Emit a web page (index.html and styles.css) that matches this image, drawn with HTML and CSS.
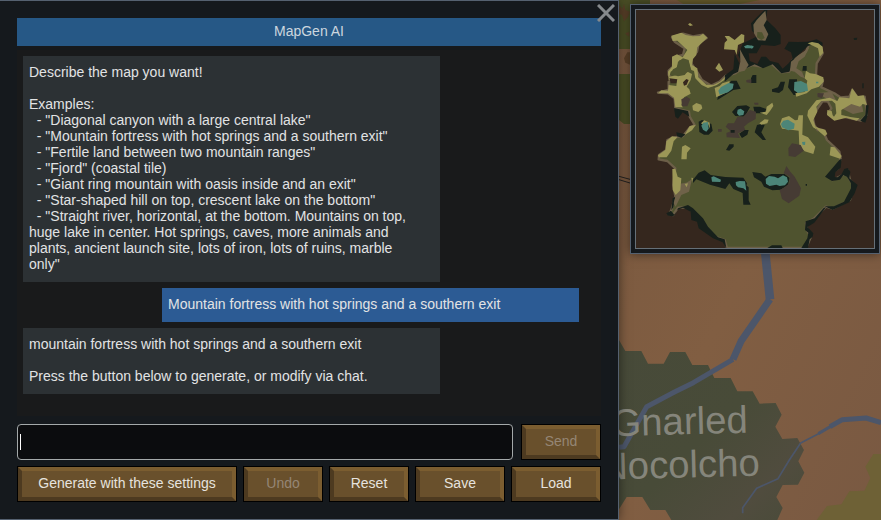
FILE: index.html
```html
<!DOCTYPE html>
<html lang="en">
<head>
  <meta charset="UTF-8" />
  <meta name="viewport" content="width=device-width, initial-scale=1.0"/>
  <title>MapGen AI</title>
  <link rel="stylesheet" href="styles.css">
</head>
<body>
  <main class="panel">
    <h1 class="panel-title">MapGen AI</h1>
    <button class="close-btn" type="button" aria-label="Close">
      <svg viewBox="0 0 18 18" aria-hidden="true"><path d="M1 1L17 17M17 1L1 17" /></svg>
    </button>

    <div class="chat-log">
      <p class="message">Describe the map you want!

Examples:
  - "Diagonal canyon with a large central lake"
  - "Mountain fortress with hot springs and a southern exit"
  - "Fertile land between two mountain ranges"
  - "Fjord" (coastal tile)
  - "Giant ring mountain with oasis inside and an exit"
  - "Star-shaped hill on top, crescent lake on the bottom"
  - "Straight river, horizontal, at the bottom. Mountains on top, huge lake in center. Hot springs, caves, more animals and plants, ancient launch site, lots of iron, lots of ruins, marble only"</p>
      <p class="message user">Mountain fortress with hot springs and a southern exit</p>
      <p class="message">mountain fortress with hot springs and a southern exit

Press the button below to generate, or modify via chat.</p>
    </div>

    <form class="chat-form">
      <input class="chat-input" type="text" aria-label="Message">
      <button class="btn" type="submit" disabled>Send</button>
    </form>

    <div class="actions">
      <button class="btn generate" type="button">Generate with these settings</button>
      <button class="btn" type="button" disabled>Undo</button>
      <button class="btn" type="button">Reset</button>
      <button class="btn wide" type="button">Save</button>
      <button class="btn wide" type="button">Load</button>
    </div>
  </main>

  <aside class="world">
    <svg class="world-map" viewBox="57 -750 786 1560" preserveAspectRatio="xMinYMin slice">
      <defs>
        <linearGradient id="soil" x1="0" y1="0" x2="1" y2="1">
          <stop offset="0" stop-color="#79583f" />
          <stop offset=".5" stop-color="#815e42" />
          <stop offset="1" stop-color="#795942" />
        </linearGradient>
        <linearGradient id="swamp" x1="0" y1="0" x2="1" y2="1">
          <stop offset="0" stop-color="#474a39" />
          <stop offset=".5" stop-color="#484b38" />
          <stop offset=".8" stop-color="#504c3e" />
          <stop offset="1" stop-color="#494b39" />
        </linearGradient>
      </defs>
      <rect x="57" y="-750" width="786" height="1560" fill="url(#soil)" />
      <path fill="#4c5026" d="M57-750H150V-603H57ZM57-528H150V-378H72L57-390Z" />
      <path fill="#685c2c" d="M150-750H230L250-738H420L480-750Z" />
      <path fill="#5b4229" d="M57-735L67-724L72-738L76-720L90-715L84-700L72-686L66-705L57-709ZM76-650L88-655V-640L80-645ZM72-575L82-593H90V-556L76-562Z" />
      <path stroke="#242321" stroke-width="3" fill="none" d="M57-221L90-212M57-211L90-201" />
      <path fill="url(#swamp)" d="M57 270L76 303H124L144 341H191L210 306H256L277 345H324L343 384H392L412 424H458L479 461L527 459L545 494L526 530L547 567L592 564L612 600L595 634L613 668L594 704L548 705L529 741L548 774L532 810H214L196 780H151L127 741H80L57 778Z" />
      <path fill="#6e6136" d="M843 612H820L796 650L811 684L793 722L748 724L724 763L681 768L650 810H843Z" />
      <g fill="none" stroke="#4c566a" stroke-linejoin="round">
        <path stroke-width="26" d="M495 0L510 148" />
        <path stroke-width="21" d="M510 148L424 272L399 328" />
        <path stroke-width="15" d="M399 328L280 398L222 427L140 470L72 590L57 592" />
        <path stroke-width="5" d="M428 790V773L470 715L534 686L568 630L602 579L660 549" />
        <path stroke-width="9" d="M655 551L725 510" />
        <path stroke-width="15" d="M690 530L727 509L798 504L843 518" />
      </g>
      <g class="region-name" text-anchor="end" transform="rotate(-1.5 440 545)">
        <text x="444" y="548">Gnarled</text>
        <text x="477" y="678">Nocolcho</text>
      </g>
    </svg>

    <div class="preview">
      <svg class="preview-map" viewBox="24 30 714 714" role="img" aria-label="Map preview">
        <rect x="24" y="30" width="714" height="714" fill="#35271e" />
        <!-- land -->
        <path fill="#4f532f" stroke="#6c5f48" stroke-width="7" stroke-linejoin="round" d="M190 190L207 215L222 240L250 257L275 245L292 228L322 220L345 205L375 195L399 200L429 190L460 217L484 215L494 180L534 155L544 130L574 135L584 160L566 190L564 225L585 240L580 262L619 280L637 292L664 290L673 270L689 292L710 290L714 320L716 345L699 362L669 355L644 350L619 357L600 340L610 325L600 305L584 303L569 325L554 350L559 375L569 390L584 390L597 420L634 455L638 475L630 505L604 525L614 540L644 525L659 510L666 540L680 555L666 600L614 626L594 620L559 655L534 670L539 695L549 710L534 744H297L290 720L260 710L225 675L200 640L180 622L150 623L135 645L123 643L130 630L142 590L136 555L142 505L118 483L92 478L93 465L115 450L118 420L135 413L165 408L185 383L200 375L185 350L183 335L142 325L140 295L120 280L90 278L122 270L122 245L135 238L122 225V212L135 200L136 172L165 165L170 145L140 125L132 112L165 101L195 109L225 104L236 114L212 130L207 155L190 175Z" />
        <!-- cliffs -->
        <g fill="#17201b">
          <path d="M388 50L409 30H418L414 58L442 85L458 105V132L440 138L400 135L386 160L362 160L365 183L388 192L400 170H414L426 183L451 189L464 206L482 190L494 175L489 157L469 146L482 125L510 126L540 125L566 118L584 128L583 142L560 132L540 138L500 175L484 215L460 220L434 193L405 205L380 193L355 205L338 180L330 165L345 130L370 118L390 108L372 93L369 70Z" />
          <path d="M320 162L334 190V214L316 222L290 245L291 226L316 208ZM374 225H385V249H369V235ZM270 285L310 242H326L338 266L316 270L268 300ZM312 336L328 318L355 316L366 322L350 350L322 348ZM376 320H396L415 327L409 340H380ZM432 268L450 262L458 245H471L465 270L453 279L432 275ZM484 238H507V285H497L480 262ZM525 198H536V212H523Z" />
          <path d="M138 324L180 333L184 350L164 337L150 356L142 350ZM212 365L214 396L228 404L242 404L254 392L250 372L222 360ZM145 397L173 403L160 413L147 409ZM387 375L400 372L410 376L400 397L414 420H404L380 397ZM334 401L350 390H362L358 404L342 414ZM294 450L304 433H317V440L304 452Z" />
          <path d="M192 543L212 518L230 511L248 525L292 531L346 533L357 550L351 576L368 614H346V580L316 567L304 550L292 567L246 554L205 538L196 548ZM342 545L362 562V614H346ZM373 516L400 520L412 530L430 522H470L485 534L480 555L458 569L433 571L408 560L400 545L378 532Z" />
          <path d="M115 640L129 632L140 646L150 625L180 615L195 625L225 655L240 680L270 712L290 718L295 744L284 727L255 715L212 685L207 665L190 660L188 635L165 623L148 630L136 649L120 647ZM134 595L142 590L136 622L130 630ZM634 480L641 476L638 503L622 517L620 531L629 532L641 522L649 507L659 504L667 515L664 535L689 555L680 580L664 607L614 630L590 619L618 619L648 605L669 565L669 550L657 530L646 525L636 539L612 543L591 530ZM533 664L560 655L587 624L594 622L559 668L538 681L556 700L554 710L545 718L540 744H520L538 715L541 698L531 690ZM418 744L432 736H460L464 744Z" />
          <path d="M714 316H722L719 345L712 368L697 362L712 345ZM677 114L688 113L686 120H678ZM703 250H707V265H703Z" />
        </g>
        <!-- hills -->
        <g fill="#6f6249">
          <path d="M412 32L416 60L407 76L421 103L412 122L390 121L378 100L376 74L386 60ZM336 148L345 165L362 195L350 212L330 217L337 185ZM165 115L195 124L215 112L205 145L185 138ZM146 575L156 551L175 548L192 538L183 575L160 585L143 620L137 610ZM486 212L489 185L514 165L544 142L530 170L512 184L505 205L522 215L530 235L518 230L500 215ZM637 295L700 305L706 335L675 342L640 325ZM566 280L610 275L625 302L602 300L584 289Z" />
        </g>
        <!-- sand -->
        <g fill="#9c9757">
          <path d="M130 107L160 98L173 105L194 109L215 108L225 101L238 113L216 134L208 142L205 165L195 177L192 195L208 205L211 232L235 254L256 255L276 245L292 230L289 240L265 256L240 264L221 255L202 235L198 213L190 210L182 185L155 180L145 205L128 215L124 230L148 225L180 216L192 222L188 240L176 260L184 268L188 281L168 292L160 315L165 322L142 322L138 293L120 280L90 280L100 271L120 272L122 255L145 258L147 240L122 240L120 215L132 200V170L147 163L164 172L178 150L148 122L134 123Z" />
          <path d="M290 108H303L320 120L340 102L349 105L348 127L330 135L326 165L320 150L288 148L290 128L298 120ZM262 205L273 188L285 210L274 215ZM180 73L186 69L195 76L186 78ZM193 317L205 309L220 314L223 325L211 336L195 331ZM260 264L275 258L283 250L305 243L300 275L265 292ZM219 370L229 361L245 368L246 386L240 372H222Z" />
          <path d="M539 130L552 126L571 130L584 140L586 158L575 170L570 145ZM534 212L546 220L562 222L586 232L587 245L573 260L550 268L536 280L505 290L502 280L530 276L538 242L530 235ZM664 295L672 264L689 288L707 286L717 315L704 312L696 320L670 312L640 330V345L670 352L695 355L686 362L655 353L619 362L597 345L598 330L611 333L614 346L618 350L625 340L622 311L612 302L580 303L565 320L568 335L556 360L565 388L555 382L538 347L540 332L565 301L605 293L628 303L634 292Z" />
          <path d="M416 320L433 308L436 318L426 333L416 345L395 338L414 335ZM394 370L410 358L422 359L418 370L400 374ZM456 372L462 355L483 348L501 361L509 360L512 346H525L523 404L540 412L562 440L556 462L530 454L514 438L512 392L495 390L462 386ZM558 378L575 385L592 389L598 402L590 409L575 396ZM608 440L620 442L641 468L636 476L605 466ZM185 378L203 375L192 391L170 405ZM112 450L115 424L132 409L148 412L137 424L130 452L116 472L92 472L90 466ZM133 507L142 506L149 530L160 535L157 571L143 585L134 570ZM162 440L172 435L188 445L177 458L176 478L160 478ZM170 552L180 550L176 562ZM190 533L195 534L193 548Z" />
        </g>
        <!-- grass inside the hills -->
        <path fill="#4f532f" d="M388 96L402 97L410 114L400 120L387 112ZM150 185L165 175L182 180L187 205L170 225L150 229L128 222L135 208L147 202Z" />
        <path fill="#35271e" d="M124 235L148 238L145 250L128 250ZM165 247L175 237L182 240L176 254L168 257Z" />
        <!-- rocky ground -->
        <g fill="#463b34">
          <path d="M345 350L366 330L384 335L383 357L360 370L348 380L352 390L330 400L336 414L296 412L295 399L308 394L293 380L300 370H318L328 351ZM481 445L492 430L518 435L527 452L502 471L482 468ZM455 570L470 562L484 550L485 530L467 520L475 498L487 515L500 530L519 565L514 587L482 610L462 597ZM355 240L370 238V250L355 247ZM160 298L176 290L187 297L178 319H162ZM568 279L588 280L582 295L569 291ZM270 387H281V395H270ZM378 308H391V314H380Z" />
        </g>
        <path fill="#17201b" d="M335 401L350 391H360L357 403L341 412ZM308 390H320V398H308ZM533 552H537V557H533Z" />
        <!-- water -->
        <g fill="#4c8578">
          <path d="M271 272L279 261L302 249L317 251L314 266L300 277L275 284ZM329 329L338 326L349 334L346 345L333 347L327 340ZM348 139L358 135L377 138L375 145H352ZM499 246L519 243L537 252L540 272L510 279L498 271ZM459 372L466 362L480 359L500 371L498 386L481 391L462 382ZM226 368L240 366L242 386L235 395L225 389L220 377ZM250 532L257 529L279 539L277 546L252 545ZM323 546L335 543L351 544L355 572L346 565L330 562L324 556ZM413 537L423 528L440 530L450 535L465 526L477 532L480 545L471 556L455 558L445 554L425 558L414 551ZM522 426L532 425L531 435L524 434ZM369 136L376 141L370 147ZM564 245H571V250H564Z" />
        </g>
      </svg>
    </div>
  </aside>
</body>
</html>
```
FILE: styles.css
```css
* {
  box-sizing: border-box;
}

body {
  margin: 0;
  height: 100vh;
  display: flex;
  overflow: hidden;
  background-color: #15181c;
  color: #e2e3e4;
  font-family: "Liberation Sans", Arial, sans-serif;
  font-size: 14px;
  line-height: 16px;
}

.panel {
  position: relative;
  z-index: 1;
  flex: 1;
  display: flex;
  flex-direction: column;
  padding: 17px;
  background-color: #15191d;
  border: 1px solid #556170;
  border-left: none;
  box-shadow: 0 0 10px rgba(0, 0, 0, 0.5);
}

.panel-title {
  margin: 0 0 4px;
  padding: 5px 6px 7px;
  background-color: #265886;
  color: #ccd6df;
  font-size: 14px;
  font-weight: normal;
  text-align: center;
}

.close-btn {
  position: absolute;
  top: 3px;
  right: 3px;
  width: 18px;
  height: 18px;
  padding: 0;
  background: none;
  border: none;
  cursor: pointer;
}

.close-btn svg {
  display: block;
  stroke: #85898c;
  stroke-width: 3;
}

.chat-log {
  flex: 1;
  min-height: 0;
  display: flex;
  flex-direction: column;
  align-items: flex-start;
  gap: 6px;
  padding: 6px;
  overflow: hidden;
  background-color: #191a1b;
}

.message {
  flex: none;
  width: 72.9%;
  margin: 0;
  padding: 8px 16px 10px 6px;
  background-color: #2c3134;
  white-space: pre-wrap;
}

.message.user {
  align-self: flex-end;
  margin-right: 16px;
  background-color: #2c5b94;
}

.chat-form {
  display: flex;
  gap: 8px;
  margin-top: 8px;
}

.chat-input {
  flex: 1;
  min-width: 0;
  height: 36px;
  padding: 0 4px;
  /* text cursor */
  background: linear-gradient(#fff, #fff) 2px center / 1px 16px no-repeat #0b0c0e;
  border: 1px solid #a4a9aa;
  border-radius: 4px;
  color: #e2e3e4;
  font: inherit;
  outline: none;
}

.actions {
  display: flex;
  gap: 6px;
  margin-top: 6px;
}

.btn {
  width: 80px;
  height: 36px;
  padding: 0 0 2px;
  background-color: #69502c;
  border: 5px solid;
  border-color: #7b5d30 #7b5d30 #4d3a20 #4d3a20;
  outline: 1px solid #000;
  outline-offset: -1px;
  color: #e6e3df;
  font: inherit;
  cursor: pointer;
}

.btn.generate {
  flex: 1;
}

.btn.wide {
  width: 90px;
}

.btn:disabled {
  color: #958675;
  cursor: default;
}

.world {
  position: relative;
  flex: 0 0 262px;
  overflow: hidden;
}

.world-map {
  position: absolute;
  inset: 0;
  width: 100%;
  height: 100%;
}

.region-name {
  fill: #85857b;
  font-size: 115px;
}

.preview {
  position: relative;
  margin: 4px 1px 0 11px;
  padding: 4px;
  background-color: #15191d;
  border: 1px solid #556170;
  box-shadow: 0 0 10px rgba(0, 0, 0, 0.5);
}

.preview-map {
  display: block;
  width: 100%;
  border: 1px solid #667078;
}
```
